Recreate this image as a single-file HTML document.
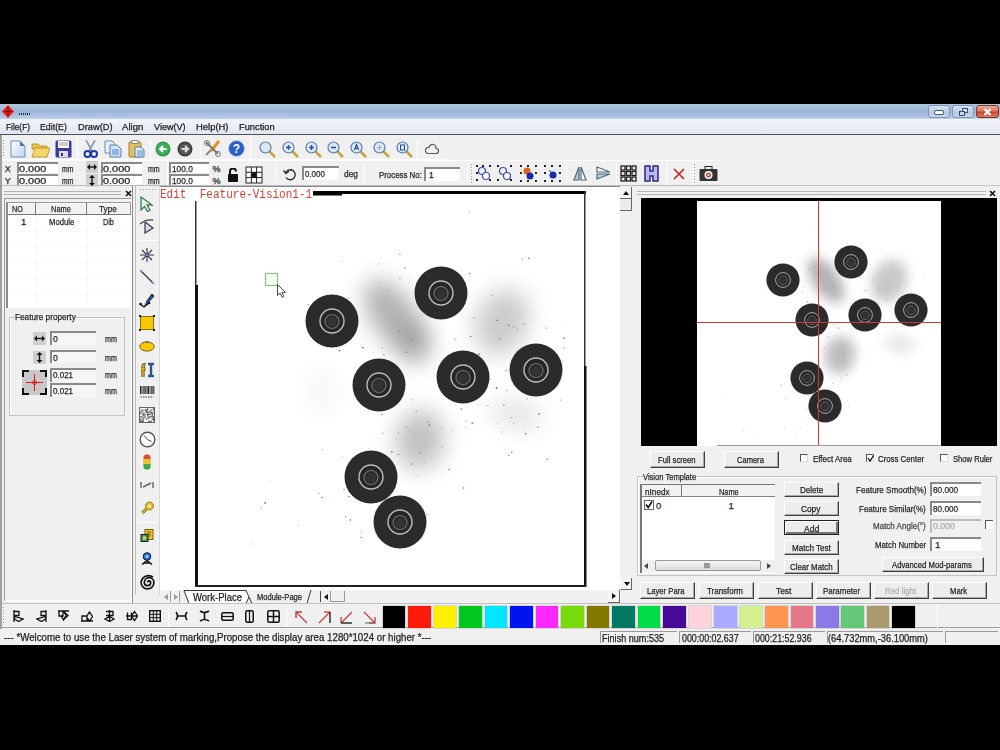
<!DOCTYPE html>
<html><head><meta charset="utf-8">
<style>
*{margin:0;padding:0;box-sizing:border-box}
html,body{width:1000px;height:750px;overflow:hidden;background:#000}
body{position:relative;font-family:"Liberation Sans",sans-serif;font-size:11px;color:#222}
.a{position:absolute}
.lbl,.btn,.inp,#menu span{white-space:nowrap}
#win{position:absolute;left:0;top:104px;width:1000px;height:541px;background:#f0f0f0;overflow:hidden}
#title{position:absolute;left:0;top:0;width:1000px;height:15px;background:linear-gradient(#b2c6e0 0%,#9cb6d7 45%,#a9c0de 75%,#bdd0e9 100%)}
#menu{position:absolute;left:0;top:15px;width:1000px;height:16px;background:linear-gradient(#f2f4fa,#e2e6f2);border-bottom:1px solid #505050}
#menu span{position:absolute;top:2px;font-size:10.5px;color:#222}
.tb{position:absolute;background:#f0f0f0}
.inp{position:absolute;background:#fff;border-top:2px solid #8a8a8a;border-left:2px solid #8a8a8a;font-size:10px;padding-left:1px;line-height:9px;color:#333}
.lbl{position:absolute;font-size:10px;color:#333}
.btn{position:absolute;background:#ededed;border:1px solid #fff;border-right-color:#404040;border-bottom-color:#404040;box-shadow:inset -1px -1px 0 #a8a8a8;font-size:10px;text-align:center;color:#222}
.sep{position:absolute;width:1px;background:#c8c8c8;border-right:1px solid #fff}
.t{position:absolute;white-space:nowrap;line-height:normal;transform-origin:0 0;-webkit-text-stroke:0.25px currentColor}
</style></head><body>
<div id="win">
  <div id="title">
    <svg class="a" style="left:1px;top:1px" width="14" height="13" viewBox="0 0 14 13"><path d="M7 0 L13 6.5 L7 13 L1 6.5Z" fill="#e0201a"/><path d="M7 2v9M3 6.5h8" stroke="#7a0a05" stroke-width="1"/></svg>
    <div class="a" style="left:19px;top:9px;width:12px;height:2px;background:repeating-linear-gradient(90deg,#234 0 1px,transparent 1px 2px)"></div>
    <div class="a" style="left:927.5px;top:0.5px;width:22px;height:13px;border:1px solid #8196b6;border-radius:3px;background:linear-gradient(#d4e0f0,#c0d0e6 50%,#b2c6e0 51%,#c6d6ec)"><div class="a" style="left:6px;top:5px;width:8px;height:3px;border-radius:1px;background:#fff;box-shadow:0 0 0 1px #4a5a70"></div></div>
    <div class="a" style="left:952px;top:0.5px;width:22px;height:13px;border:1px solid #8196b6;border-radius:3px;background:linear-gradient(#d4e0f0,#c0d0e6 50%,#b2c6e0 51%,#c6d6ec)"><div class="a" style="left:9px;top:2px;width:6px;height:5px;border:1px solid #3b4d66;background:#dde"></div><div class="a" style="left:6px;top:5px;width:6px;height:5px;border:1px solid #3b4d66;background:#cfd8e4"></div></div>
    <div class="a" style="left:976px;top:0.5px;width:22.5px;height:13px;border:1px solid #7a3a30;border-radius:3px;background:linear-gradient(#eaa595,#dc7a62 45%,#c8482e 55%,#d8765c)"><svg class="a" style="left:6px;top:2px" width="9" height="8" viewBox="0 0 9 8"><path d="M1.5 1l6 6M7.5 1l-6 6" stroke="#fff" stroke-width="2.2"/></svg></div>
  </div>
  <div id="menu">
  </div>

  <!-- toolbar row 1 -->
  <div class="a" style="left:2px;top:32px;width:444px;height:24px;background:#f0f0f0;border-bottom:1px solid #fff"></div>
  <div class="a" style="left:3px;top:36px;width:1px;height:16px;background:repeating-linear-gradient(#999 0 1px,transparent 1px 3px)"></div>
  <!-- new -->
  <svg class="a" style="left:10px;top:36px" width="16" height="18" viewBox="0 0 16 18"><path d="M1 1h9l5 5v11H1z" fill="url(#gdoc)" stroke="#6b8fb8"/><path d="M10 1v5h5" fill="#4a78b0"/><defs><linearGradient id="gdoc" x1="0" y1="0" x2="1" y2="1"><stop offset="0" stop-color="#fff"/><stop offset="1" stop-color="#b8d3ee"/></linearGradient></defs></svg>
  <!-- open -->
  <svg class="a" style="left:31px;top:37px" width="19" height="17" viewBox="0 0 19 17"><path d="M1 3h6l2 2h7v3H1z" fill="#e8c24a" stroke="#b08a20" stroke-width=".8"/><path d="M1 16L4 7h15l-3 9z" fill="#f5d66a" stroke="#b08a20" stroke-width=".8"/></svg>
  <!-- save -->
  <svg class="a" style="left:55px;top:36px" width="17" height="18" viewBox="0 0 17 18"><rect x="0.5" y="0.5" width="16" height="17" rx="1.5" fill="#3c3ca0"/><rect x="3" y="1" width="11" height="7" fill="#fff"/><path d="M4 3h9M4 5h9" stroke="#99a"/><rect x="4" y="11" width="9" height="6" fill="#dde"/><rect x="6" y="13" width="2" height="3" fill="#333"/></svg>
  <div class="sep" style="left:77px;top:35px;height:20px"></div>
  <!-- cut -->
  <svg class="a" style="left:83px;top:36px" width="15" height="18" viewBox="0 0 15 18"><path d="M3 0L9 11M12 0L6 11" stroke="#8898a8" stroke-width="1.6"/><circle cx="4.5" cy="14" r="3" fill="none" stroke="#1a3aa8" stroke-width="2"/><circle cx="11" cy="14" r="3" fill="none" stroke="#1a3aa8" stroke-width="2"/></svg>
  <!-- copy -->
  <svg class="a" style="left:104px;top:36px" width="18" height="18" viewBox="0 0 18 18"><path d="M1 1h7l3 3v9H1z" fill="#e8f0fa" stroke="#6a8ab8"/><path d="M6 5h7l4 4v8H6z" fill="#d4e4f6" stroke="#5a7ab0"/><path d="M8 10h7M8 12h7M8 14h7" stroke="#4a8ad0"/></svg>
  <!-- paste -->
  <svg class="a" style="left:128px;top:36px" width="17" height="18" viewBox="0 0 17 18"><rect x="1" y="2" width="12" height="15" rx="1" fill="#e0c060" stroke="#a08030"/><rect x="4" y="0.5" width="6" height="3" fill="#fff" stroke="#888"/><path d="M7 7h6l3 3v7H7z" fill="#e4eef8" stroke="#5a7ab0"/><path d="M9 11h6M9 13h6M9 15h6" stroke="#4a8ad0"/></svg>
  <div class="sep" style="left:150px;top:35px;height:20px"></div>
  <svg class="a" style="left:155px;top:37px" width="16" height="16" viewBox="0 0 16 16"><circle cx="8" cy="8" r="7.5" fill="#2f9a4a"/><circle cx="8" cy="8" r="6" fill="#3fae5a"/><path d="M11.5 8H5M8 5L5 8l3 3" stroke="#fff" stroke-width="2" fill="none"/></svg>
  <svg class="a" style="left:177px;top:37px" width="16" height="16" viewBox="0 0 16 16"><circle cx="8" cy="8" r="7.5" fill="#3a3a3a"/><circle cx="8" cy="8" r="6" fill="#585858"/><path d="M4.5 8H11M8 5l3 3-3 3" stroke="#ddd" stroke-width="2" fill="none"/></svg>
  <div class="sep" style="left:200px;top:35px;height:20px"></div>
  <svg class="a" style="left:204px;top:36px" width="17" height="17" viewBox="0 0 17 17"><path d="M2 15L13 4" stroke="#888" stroke-width="2"/><path d="M15 1L7 11" stroke="#e89020" stroke-width="3"/><path d="M2 2l12 12" stroke="#777" stroke-width="2"/><circle cx="3" cy="3" r="2.5" fill="none" stroke="#777"/><circle cx="14" cy="14" r="2.5" fill="none" stroke="#777"/></svg>
  <svg class="a" style="left:228px;top:36px" width="17" height="17" viewBox="0 0 17 17"><circle cx="8.5" cy="8.5" r="8" fill="#2a5ec8" stroke="#bcd" /><text x="8.5" y="13" font-size="12" font-weight="bold" fill="#fff" text-anchor="middle" font-family="Liberation Sans">?</text></svg>
  <div class="sep" style="left:250px;top:35px;height:20px"></div>
<svg class="a" style="left:259px;top:37px" width="17" height="17" viewBox="0 0 17 17"><path d="M10 10l6 6" stroke="#c8a040" stroke-width="2.5"/><circle cx="6.5" cy="6.5" r="5.5" fill="#dbe8f6" stroke="#5a7aa8" stroke-width="1.2"/></svg>
<svg class="a" style="left:282px;top:37px" width="17" height="17" viewBox="0 0 17 17"><path d="M10 10l6 6" stroke="#c8a040" stroke-width="2.5"/><circle cx="6.5" cy="6.5" r="5.5" fill="#dbe8f6" stroke="#5a7aa8" stroke-width="1.2"/><path d="M4 6.5h5M6.5 4v5" stroke="#2a4a9a" stroke-width="1.3"/></svg>
<svg class="a" style="left:305px;top:37px" width="17" height="17" viewBox="0 0 17 17"><path d="M10 10l6 6" stroke="#c8a040" stroke-width="2.5"/><circle cx="6.5" cy="6.5" r="5.5" fill="#dbe8f6" stroke="#5a7aa8" stroke-width="1.2"/><path d="M4 6.5h5M6.5 4v5" stroke="#2a4a9a" stroke-width="1.5"/></svg>
<svg class="a" style="left:327px;top:37px" width="17" height="17" viewBox="0 0 17 17"><path d="M10 10l6 6" stroke="#c8a040" stroke-width="2.5"/><circle cx="6.5" cy="6.5" r="5.5" fill="#dbe8f6" stroke="#5a7aa8" stroke-width="1.2"/><path d="M4 6.5h5" stroke="#2a4a9a" stroke-width="1.5"/></svg>
<svg class="a" style="left:350px;top:37px" width="17" height="17" viewBox="0 0 17 17"><path d="M10 10l6 6" stroke="#c8a040" stroke-width="2.5"/><circle cx="6.5" cy="6.5" r="5.5" fill="#dbe8f6" stroke="#5a7aa8" stroke-width="1.2"/><path d="M4.5 9L6.5 3.5 8.5 9M5 7.5h3" stroke="#2a4a9a" stroke-width="1.2" fill="none"/></svg>
<svg class="a" style="left:373px;top:37px" width="17" height="17" viewBox="0 0 17 17"><path d="M10 10l6 6" stroke="#c8a040" stroke-width="2.5"/><circle cx="6.5" cy="6.5" r="5.5" fill="#dbe8f6" stroke="#5a7aa8" stroke-width="1.2"/><path d="M4 6.5h5M6.5 4v5" stroke="#9ab" stroke-width="1"/></svg>
<svg class="a" style="left:396px;top:37px" width="17" height="17" viewBox="0 0 17 17"><path d="M10 10l6 6" stroke="#c8a040" stroke-width="2.5"/><circle cx="6.5" cy="6.5" r="5.5" fill="#dbe8f6" stroke="#5a7aa8" stroke-width="1.2"/><rect x="4.5" y="4" width="4" height="5" fill="none" stroke="#2a4a9a"/></svg>

  <div class="sep" style="left:417px;top:35px;height:20px"></div>
  <svg class="a" style="left:425px;top:39px" width="14" height="12" viewBox="0 0 14 12"><path d="M3 10.5h8a2.5 2.5 0 0 0 0-5 3.5 3.5 0 0 0-7-1A3 3 0 0 0 3 10.5z" fill="none" stroke="#555" stroke-width="1.2"/></svg>
  <!-- toolbar row 2 -->
  <div class="a" style="left:2px;top:56px;width:718px;height:26px;background:#f0f0f0;border-top:1px solid #fff;border-bottom:1px solid #bbb"></div>
  <div class="inp" style="left:17px;top:58px;width:41px;height:11px"></div>
  <div class="inp" style="left:17px;top:70px;width:41px;height:11px"></div>
  <div class="a" style="left:86px;top:57px;width:12px;height:12px;background:#cfcfcf"><svg class="a" style="left:1px;top:3px" width="10" height="6" viewBox="0 0 10 6"><path d="M2 3h6" stroke="#111" stroke-width="1.4"/><path d="M0 3l3-3v6zM10 3L7 0v6z" fill="#111"/></svg></div>
  <div class="a" style="left:86px;top:70px;width:12px;height:13px;background:#cfcfcf"><svg class="a" style="left:3px;top:1px" width="6" height="11" viewBox="0 0 6 11"><path d="M3 2v7" stroke="#111" stroke-width="1.4"/><path d="M3 0L0 3h6zM3 11L0 8h6z" fill="#111"/></svg></div>
  <div class="inp" style="left:101px;top:58px;width:41px;height:11px"></div>
  <div class="inp" style="left:101px;top:70px;width:41px;height:11px"></div>
  <div class="sep" style="left:167px;top:58px;height:23px"></div>
  <div class="inp" style="left:169px;top:58px;width:40px;height:11px"></div>
  <div class="inp" style="left:169px;top:70px;width:40px;height:11px"></div>
  <svg class="a" style="left:227px;top:64px" width="12" height="14" viewBox="0 0 12 14"><path d="M3 6V3.5a3 3 0 0 1 6 0" fill="none" stroke="#111" stroke-width="2"/><rect x="1" y="6" width="10" height="8" rx="1" fill="#111"/></svg>
  <svg class="a" style="left:245px;top:62px" width="18" height="18" viewBox="0 0 18 18"><rect x="1" y="1" width="16" height="16" fill="#fff" stroke="#222"/><path d="M6.3 1v16M11.6 1v16M1 6.3h16M1 11.6h16" stroke="#222"/><rect x="6.3" y="6.3" width="5.3" height="5.3" fill="#111"/></svg>
  <div class="sep" style="left:276px;top:58px;height:23px"></div>
  <svg class="a" style="left:283px;top:64px" width="13" height="13" viewBox="0 0 13 13"><path d="M3 4a5 5 0 1 1 0 5.5" fill="none" stroke="#222" stroke-width="1.3"/><path d="M0.5 2.5L3 5.5 6 3" fill="none" stroke="#222" stroke-width="1.3"/></svg>
  <div class="inp" style="left:302px;top:62px;width:37px;height:14px;line-height:12px"></div>
  <div class="sep" style="left:363px;top:58px;height:23px"></div>
  <div class="inp" style="left:424px;top:63px;width:36px;height:14px;line-height:12px"></div>
  <div class="sep" style="left:467px;top:58px;height:23px"></div>

  <!-- toolbar2 right icons -->
  <div class="a" style="left:471px;top:60px;width:1px;height:20px;background:repeating-linear-gradient(#999 0 1px,transparent 1px 3px)"></div>
  <svg class="a" style="left:476px;top:60.5px" width="16" height="17" viewBox="0 0 16 17"><g fill="#222"><rect x="0" y="0" width="2" height="2"/><rect x="13" y="0" width="2" height="2"/><rect x="0" y="14" width="2" height="2"/><rect x="13" y="14" width="2" height="2"/><rect x="6" y="0" width="2" height="2"/><rect x="0" y="7" width="2" height="2"/></g><circle cx="6" cy="6" r="3.5" fill="none" stroke="#3a4ab0" stroke-width="1.2"/><circle cx="10" cy="11" r="3.5" fill="#fff" stroke="#3a4ab0" stroke-width="1.2"/></svg>
  <svg class="a" style="left:497px;top:60.5px" width="16" height="17" viewBox="0 0 16 17"><g fill="#222"><rect x="0" y="0" width="2" height="2"/><rect x="13" y="0" width="2" height="2"/><rect x="0" y="14" width="2" height="2"/><rect x="13" y="14" width="2" height="2"/></g><circle cx="6" cy="6" r="3.5" fill="none" stroke="#3a4ab0" stroke-width="1.2"/><circle cx="10" cy="11" r="3.5" fill="#fff" stroke="#3a4ab0" stroke-width="1.2"/></svg>
  <svg class="a" style="left:520px;top:60.5px" width="17" height="17" viewBox="0 0 17 17"><g fill="#222"><rect x="0" y="0" width="2" height="2"/><rect x="15" y="0" width="2" height="2"/><rect x="0" y="15" width="2" height="2"/><rect x="15" y="15" width="2" height="2"/><rect x="7" y="0" width="2" height="2"/><rect x="0" y="7" width="2" height="2"/><rect x="15" y="7" width="2" height="2"/><rect x="7" y="15" width="2" height="2"/></g><circle cx="7" cy="6" r="3.5" fill="#e06020"/><circle cx="10" cy="11" r="3.5" fill="#1a2ab0"/></svg>
  <svg class="a" style="left:544px;top:60.5px" width="17" height="17" viewBox="0 0 17 17"><g fill="#222"><rect x="0" y="0" width="2" height="2"/><rect x="15" y="0" width="2" height="2"/><rect x="0" y="15" width="2" height="2"/><rect x="15" y="15" width="2" height="2"/><rect x="7" y="0" width="2" height="2"/><rect x="0" y="7" width="2" height="2"/><rect x="15" y="7" width="2" height="2"/><rect x="7" y="15" width="2" height="2"/></g><circle cx="9" cy="10" r="3.5" fill="#1a2ab0"/><path d="M5 5l3 3" stroke="#1a2ab0"/></svg>
  <div class="sep" style="left:566px;top:58px;height:23px"></div>
  <svg class="a" style="left:573px;top:61.5px" width="14" height="15" viewBox="0 0 14 15"><path d="M6 1L1 14h5z" fill="#bcd" stroke="#4a6a7a" stroke-width="1.2"/><path d="M8 1l5 13H8z" fill="#fff" stroke="#4a6a7a" stroke-width="1.2"/></svg>
  <svg class="a" style="left:596px;top:61.5px" width="15" height="14" viewBox="0 0 15 14"><path d="M14 6L1 1v5z" fill="#fff" stroke="#4a6a7a" stroke-width="1.2"/><path d="M14 8L1 13V8z" fill="#bcd" stroke="#4a6a7a" stroke-width="1.2"/></svg>
  <div class="sep" style="left:616px;top:58px;height:23px"></div>
  <svg class="a" style="left:620px;top:60.5px" width="17" height="17" viewBox="0 0 17 17"><g fill="none" stroke="#222" stroke-width="1.3"><rect x="1" y="1" width="4" height="4"/><rect x="6.5" y="1" width="4" height="4"/><rect x="12" y="1" width="4" height="4"/><rect x="1" y="6.5" width="4" height="4"/><rect x="6.5" y="6.5" width="4" height="4"/><rect x="12" y="6.5" width="4" height="4"/><rect x="1" y="12" width="4" height="4"/><rect x="6.5" y="12" width="4" height="4"/><rect x="12" y="12" width="4" height="4"/></g></svg>
  <svg class="a" style="left:644px;top:60.5px" width="15" height="17" viewBox="0 0 15 17"><path d="M1 1h5v5h3V1h5v15H9v-5H6v5H1z" fill="#b8b8f0" stroke="#2a2a80" stroke-width="1.5"/></svg>
  <div class="sep" style="left:666px;top:58px;height:23px"></div>
  <svg class="a" style="left:673px;top:63.5px" width="12" height="12" viewBox="0 0 12 12"><path d="M1 1l10 10M11 1L1 11" stroke="#c82020" stroke-width="1.6"/></svg>
  <div class="sep" style="left:693px;top:58px;height:23px"></div>
  <div class="a" style="left:694px;top:60px;width:1px;height:20px;background:repeating-linear-gradient(#999 0 1px,transparent 1px 3px)"></div>
  <svg class="a" style="left:699px;top:61.5px" width="19" height="16" viewBox="0 0 19 16"><rect x="6" y="0.5" width="7" height="3" fill="none" stroke="#222"/><rect x="0.5" y="3" width="18" height="12" rx="1" fill="#333"/><circle cx="9.5" cy="9" r="4" fill="#fff"/><circle cx="9.5" cy="9" r="2.5" fill="#d04040"/><circle cx="9.5" cy="9" r="1" fill="#fff"/></svg>

  <div class="a" style="left:720px;top:81px;width:280px;height:1px;background:#c4c4c4"></div>
  <!-- main area (win top = 104) -->
  <div class="a" style="left:0;top:31px;width:2px;height:510px;background:#a0a0a0"></div>
  <!-- left panel: abs y 186-603 -->
  <div class="a" style="left:4px;top:87px;width:117px;height:4px;border-top:1px solid #b4b4b4;border-bottom:1px solid #b4b4b4"></div>
  <svg class="a" style="left:125px;top:86px" width="7" height="7" viewBox="0 0 7 7"><path d="M1 1l5 5M6 1L1 6" stroke="#111" stroke-width="1.6"/></svg>
  <div class="a" style="left:4px;top:94px;width:128px;height:403px;border:1px solid #9a9a9a;border-right-color:#fff;border-bottom-color:#fff"></div>
  <div class="a" style="left:132px;top:82px;width:1px;height:420px;background:#8a8a8a"></div>
  <!-- table -->
  <div class="a" style="left:6px;top:98px;width:125px;height:106px;background:#fff;border-top:1px solid #999;border-left:2px solid #8a8a8a"></div><div class="a" style="left:9px;top:127px;width:121px;height:1px;background:#f8f8f8"></div><div class="a" style="left:9px;top:143px;width:121px;height:1px;background:#f8f8f8"></div><div class="a" style="left:9px;top:159px;width:121px;height:1px;background:#f8f8f8"></div><div class="a" style="left:9px;top:175px;width:121px;height:1px;background:#f8f8f8"></div><div class="a" style="left:9px;top:191px;width:121px;height:1px;background:#f8f8f8"></div><div class="a" style="left:36px;top:111px;width:1px;height:93px;background:#f8f8f8"></div><div class="a" style="left:87px;top:111px;width:1px;height:93px;background:#f8f8f8"></div>
  <div class="a" style="left:8px;top:99px;width:123px;height:12px;background:#f2f2f2;border-right:1px solid #999;border-bottom:1px solid #777;box-shadow:inset 1px 1px 0 #fff"></div>
  <div class="a" style="left:35px;top:99px;width:1px;height:11px;background:#777"></div>
  <div class="a" style="left:86px;top:99px;width:1px;height:11px;background:#777"></div>
  <!-- feature property group abs y 313-412 -->
  <div class="a" style="left:9px;top:213px;width:116px;height:99px;border:1px solid #c4c4c4;box-shadow:inset 1px 1px 0 #fff"></div>
  <div class="a" style="left:33px;top:228px;width:13px;height:13px;background:#cfcfcf"><svg class="a" style="left:1px;top:3px" width="11" height="7" viewBox="0 0 11 7"><path d="M2 3.5h7" stroke="#111" stroke-width="1.4"/><path d="M0 3.5L3 .5v6zM11 3.5L8 .5v6z" fill="#111"/></svg></div>
  <div class="a" style="left:33px;top:247px;width:13px;height:13px;background:#cfcfcf"><svg class="a" style="left:3px;top:1px" width="7" height="11" viewBox="0 0 7 11"><path d="M3.5 2v7" stroke="#111" stroke-width="1.4"/><path d="M3.5 0L.5 3h6zM3.5 11L.5 8h6z" fill="#111"/></svg></div>
  <div class="inp" style="left:50px;top:227px;width:46px;height:14px;background:#f6f6f6"></div>
  <div class="inp" style="left:50px;top:246px;width:46px;height:13px;background:#f6f6f6"></div>
  <div class="a" style="left:22px;top:266px;width:25px;height:25px;background:#c8c8c8"><svg class="a" style="left:0;top:0" width="25" height="25" viewBox="0 0 25 25"><path d="M1 7V1h6M18 1h6v6M24 18v6h-6M7 24H1v-6" stroke="#111" stroke-width="2" fill="none"/><path d="M12.5 4v17M4 12.5h17" stroke="#e02020" stroke-width="1"/><circle cx="12.5" cy="12.5" r="2" fill="none" stroke="#e02020"/></svg></div>
  <div class="inp" style="left:50px;top:264px;width:46px;height:14px;background:#f6f6f6"></div>
  <div class="inp" style="left:50px;top:279px;width:46px;height:14px;background:#f6f6f6"></div>

  <!-- vertical tool strip abs x 135-160 -->
  <div class="a" style="left:135px;top:82px;width:25px;height:409px;background:#f0f0f0;border-left:1px solid #c0c0c0;border-right:1px solid #d8d8d8"></div>
  <div class="a" style="left:140px;top:85px;width:16px;height:1px;background:repeating-linear-gradient(90deg,#999 0 1px,transparent 1px 3px)"></div>
  <svg class="a" style="left:139px;top:92px" width="16" height="16" viewBox="0 0 16 16"><path d="M2 1v13l3.5-3.5 3 5 2.5-1.5-3-5H13z" fill="#e4f4ea" stroke="#3a7a50" stroke-width="1.3"/></svg>
<svg class="a" style="left:139px;top:114px" width="16" height="16" viewBox="0 0 16 16"><path d="M1 6Q7 1 14 2" fill="none" stroke="#444" stroke-width="1.3"/><path d="M6 4v11l8-5z" fill="#d8d8f0" stroke="#444" stroke-width="1.3"/><circle cx="6" cy="4" r="1.3" fill="#6a6ab0"/></svg>
<div class="a" style="left:138px;top:136px;width:19px;height:1px;background:#aaa;border-bottom:1px solid #fff"></div>
<svg class="a" style="left:139px;top:143px" width="16" height="16" viewBox="0 0 16 16"><path d="M8 1v14M1 8h14M3 3l10 10M13 3L3 13" stroke="#334" stroke-width="1.1"/><circle cx="8" cy="8" r="1.3" fill="#6a8ad0"/></svg>
<svg class="a" style="left:139px;top:165px" width="16" height="16" viewBox="0 0 16 16"><path d="M2 2l12 12" stroke="#333" stroke-width="1.2"/><circle cx="2" cy="2" r="1.3" fill="#7a9ad0"/><circle cx="14" cy="14" r="1.3" fill="#7a9ad0"/></svg>
<svg class="a" style="left:139px;top:188px" width="16" height="16" viewBox="0 0 16 16"><path d="M1 12l4 3 5-4" fill="none" stroke="#111" stroke-width="1.3"/><circle cx="1.5" cy="12" r="1.3" fill="#111"/><circle cx="10" cy="11" r="1.3" fill="#111"/><path d="M5 13L13 2l2 2-8 9z" fill="#2a5ab8" stroke="#112"/><path d="M5 13l2-3" stroke="#fff"/></svg>
<svg class="a" style="left:139px;top:211px" width="16" height="16" viewBox="0 0 16 16"><rect x="1.5" y="1.5" width="13" height="13" fill="#f8c800" stroke="#887020"/><g fill="#222"><rect x="0" y="0" width="2" height="2"/><rect x="14" y="0" width="2" height="2"/><rect x="0" y="14" width="2" height="2"/><rect x="14" y="14" width="2" height="2"/></g></svg>
<svg class="a" style="left:139px;top:234px" width="16" height="16" viewBox="0 0 16 16"><ellipse cx="8" cy="8.5" rx="7.2" ry="4.6" fill="#f8c800" stroke="#806010" stroke-width="1"/><path d="M6.5 4h3" stroke="#556" stroke-width="1.2"/></svg>
<svg class="a" style="left:139px;top:258px" width="16" height="16" viewBox="0 0 16 16"><path d="M6.5 2.5Q4 2 4 5v10M2 7h4.5" stroke="#333" stroke-width="3" fill="none"/><path d="M6.5 2.5Q4 2 4 5v10M2 7h4.5" stroke="#e8b400" stroke-width="1.6" fill="none"/><path d="M9 2h6M12 2v12M9 14h6" stroke="#2a5a8a" stroke-width="2.4"/></svg>
<svg class="a" style="left:139px;top:281px" width="16" height="16" viewBox="0 0 16 16"><g fill="#222"><rect x="1" y="1" width="1" height="8"/><rect x="2.5" y="1" width="0.6" height="8"/><rect x="3.6" y="1" width="1" height="8"/><rect x="5.2" y="1" width="0.6" height="8"/><rect x="6.3" y="1" width="1.2" height="8"/><rect x="8" y="1" width="0.6" height="8"/><rect x="9" y="1" width="1" height="8"/><rect x="10.6" y="1" width="0.6" height="8"/><rect x="11.7" y="1" width="1" height="8"/><rect x="13.3" y="1" width="0.6" height="8"/><rect x="14.3" y="1" width="1" height="8"/></g><path d="M1.5 12h13" stroke="#777" stroke-width="1.4" stroke-dasharray="1.5 1"/></svg>
<svg class="a" style="left:139px;top:303px" width="16" height="16" viewBox="0 0 16 16"><rect x="0.5" y="0.5" width="15" height="15" fill="#f4f4f4" stroke="#666"/><g fill="#444"><rect x="8.10" y="1.20" width="1.15" height="1.15"/><rect x="13.85" y="1.20" width="1.15" height="1.15"/><rect x="2.35" y="2.35" width="1.15" height="1.15"/><rect x="5.80" y="2.35" width="1.15" height="1.15"/><rect x="6.95" y="2.35" width="1.15" height="1.15"/><rect x="8.10" y="2.35" width="1.15" height="1.15"/><rect x="11.55" y="2.35" width="1.15" height="1.15"/><rect x="13.85" y="2.35" width="1.15" height="1.15"/><rect x="2.35" y="3.50" width="1.15" height="1.15"/><rect x="3.50" y="3.50" width="1.15" height="1.15"/><rect x="5.80" y="3.50" width="1.15" height="1.15"/><rect x="6.95" y="3.50" width="1.15" height="1.15"/><rect x="10.40" y="3.50" width="1.15" height="1.15"/><rect x="1.20" y="4.65" width="1.15" height="1.15"/><rect x="6.95" y="4.65" width="1.15" height="1.15"/><rect x="8.10" y="4.65" width="1.15" height="1.15"/><rect x="9.25" y="4.65" width="1.15" height="1.15"/><rect x="10.40" y="4.65" width="1.15" height="1.15"/><rect x="11.55" y="4.65" width="1.15" height="1.15"/><rect x="12.70" y="4.65" width="1.15" height="1.15"/><rect x="1.20" y="5.80" width="1.15" height="1.15"/><rect x="3.50" y="5.80" width="1.15" height="1.15"/><rect x="4.65" y="5.80" width="1.15" height="1.15"/><rect x="8.10" y="5.80" width="1.15" height="1.15"/><rect x="11.55" y="5.80" width="1.15" height="1.15"/><rect x="13.85" y="5.80" width="1.15" height="1.15"/><rect x="3.50" y="6.95" width="1.15" height="1.15"/><rect x="5.80" y="6.95" width="1.15" height="1.15"/><rect x="8.10" y="6.95" width="1.15" height="1.15"/><rect x="9.25" y="6.95" width="1.15" height="1.15"/><rect x="10.40" y="6.95" width="1.15" height="1.15"/><rect x="12.70" y="6.95" width="1.15" height="1.15"/><rect x="3.50" y="8.10" width="1.15" height="1.15"/><rect x="4.65" y="8.10" width="1.15" height="1.15"/><rect x="8.10" y="8.10" width="1.15" height="1.15"/><rect x="12.70" y="8.10" width="1.15" height="1.15"/><rect x="1.20" y="9.25" width="1.15" height="1.15"/><rect x="2.35" y="9.25" width="1.15" height="1.15"/><rect x="5.80" y="9.25" width="1.15" height="1.15"/><rect x="9.25" y="9.25" width="1.15" height="1.15"/><rect x="10.40" y="9.25" width="1.15" height="1.15"/><rect x="11.55" y="9.25" width="1.15" height="1.15"/><rect x="12.70" y="9.25" width="1.15" height="1.15"/><rect x="13.85" y="9.25" width="1.15" height="1.15"/><rect x="3.50" y="10.40" width="1.15" height="1.15"/><rect x="4.65" y="10.40" width="1.15" height="1.15"/><rect x="8.10" y="10.40" width="1.15" height="1.15"/><rect x="9.25" y="10.40" width="1.15" height="1.15"/><rect x="13.85" y="10.40" width="1.15" height="1.15"/><rect x="1.20" y="11.55" width="1.15" height="1.15"/><rect x="3.50" y="11.55" width="1.15" height="1.15"/><rect x="6.95" y="11.55" width="1.15" height="1.15"/><rect x="12.70" y="11.55" width="1.15" height="1.15"/><rect x="13.85" y="11.55" width="1.15" height="1.15"/><rect x="1.20" y="12.70" width="1.15" height="1.15"/><rect x="3.50" y="12.70" width="1.15" height="1.15"/><rect x="13.85" y="12.70" width="1.15" height="1.15"/><rect x="1.20" y="13.85" width="1.15" height="1.15"/><rect x="2.35" y="13.85" width="1.15" height="1.15"/><rect x="3.50" y="13.85" width="1.15" height="1.15"/><rect x="9.25" y="13.85" width="1.15" height="1.15"/><rect x="10.40" y="13.85" width="1.15" height="1.15"/><rect x="11.55" y="13.85" width="1.15" height="1.15"/></g></svg>
<svg class="a" style="left:139px;top:327px" width="17" height="17" viewBox="0 0 17 17"><circle cx="8.5" cy="8.5" r="7.3" fill="#fff" stroke="#555" stroke-width="1.4"/><path d="M8.5 8.5L5 4.5M8.5 8.5l4 2" stroke="#444" stroke-width="1" fill="none"/></svg>
<svg class="a" style="left:140px;top:350px" width="14" height="16" viewBox="0 0 14 16"><rect x="3.5" y="0.5" width="7" height="15" rx="3.5" fill="#9ac040"/><path d="M3.5 4a3.5 3.5 0 0 1 7 0v1h-7z" fill="#e04a3a"/><rect x="3.5" y="5" width="7" height="5" fill="#f0c030"/><path d="M3.5 10h7v2a3.5 3.5 0 0 1-7 0z" fill="#40a848"/></svg>
<svg class="a" style="left:139px;top:377px" width="16" height="8" viewBox="0 0 16 8"><path d="M2 1v6M14 1v6M4 6l8-4" stroke="#666" stroke-width="1.4" fill="none"/></svg>
<svg class="a" style="left:140px;top:397px" width="15" height="14" viewBox="0 0 15 14"><circle cx="9.5" cy="5" r="4" fill="#e8c020" stroke="#6a5a10" stroke-width="1" stroke-dasharray="1.6 .9"/><circle cx="9.5" cy="5" r="1.5" fill="#fff"/><path d="M7 7.5l-4.5 4.5" stroke="#6a5a10" stroke-width="3"/><path d="M7 7.5l-4.5 4.5" stroke="#e8c020" stroke-width="1.6"/></svg>
<div class="a" style="left:138px;top:418px;width:19px;height:1px;background:#aaa;border-bottom:1px solid #fff"></div>
<svg class="a" style="left:140px;top:425px" width="14" height="13" viewBox="0 0 14 13"><rect x="5" y="0.5" width="8" height="10" fill="#f0c830" stroke="#7a6010"/><path d="M7 3h4M7 5h4M7 7h4" stroke="#7a6010"/><rect x="1" y="5.5" width="7" height="7" fill="#3a9a50" stroke="#223"/><rect x="3" y="7.5" width="3" height="3" fill="#e8d060"/></svg>
<svg class="a" style="left:140px;top:448px" width="14" height="13" viewBox="0 0 14 13"><circle cx="7" cy="4.5" r="3.8" fill="#2a7ad8" stroke="#113" stroke-width="1"/><circle cx="7" cy="4.5" r="1.3" fill="#cde"/><path d="M7 8.5L2 12.5M7 8.5l5 4M3.5 11h7" stroke="#111" stroke-width="1.6"/></svg>
<svg class="a" style="left:139px;top:470px" width="17" height="17" viewBox="0 0 17 17"><path d="M8.5 8.5a1.6 1.6 0 0 1 3.2 0 3.2 3.2 0 0 1-6.4 0 4.8 4.8 0 0 1 9.6 0 6.4 6.4 0 0 1-12.8 0A7.6 7.6 0 0 1 14 3" fill="none" stroke="#111" stroke-width="1.7"/></svg>


  <!-- canvas abs x 160-620, y 186-590 -->
  <div class="a" style="left:160px;top:82px;width:460px;height:404px;background:#fff;border-top:1px solid #888"></div>
  <svg class="a" style="left:160px;top:83px" width="460" height="403" viewBox="0 0 460 403"><defs><filter id="bl" x="-60%" y="-60%" width="220%" height="220%"><feGaussianBlur stdDeviation="11"/></filter></defs><ellipse cx="235" cy="131" rx="22" ry="44" transform="rotate(-35 235 131)" fill="#4a4a4a" opacity="0.42" filter="url(#bl)"/><ellipse cx="256" cy="158" rx="18" ry="22" transform="rotate(0 256 158)" fill="#4a4a4a" opacity="0.22" filter="url(#bl)"/><ellipse cx="342" cy="135" rx="26" ry="34" transform="rotate(25 342 135)" fill="#4a4a4a" opacity="0.28" filter="url(#bl)"/><ellipse cx="260" cy="253" rx="24" ry="30" transform="rotate(10 260 253)" fill="#4a4a4a" opacity="0.34" filter="url(#bl)"/><ellipse cx="356" cy="227" rx="26" ry="14" transform="rotate(10 356 227)" fill="#4a4a4a" opacity="0.14" filter="url(#bl)"/><ellipse cx="162" cy="205" rx="12" ry="22" transform="rotate(0 162 205)" fill="#4a4a4a" opacity="0.05" filter="url(#bl)"/><circle cx="293.2" cy="241.7" r="0.42" fill="#444" opacity="0.79"/><circle cx="230.8" cy="143.3" r="0.65" fill="#444" opacity="0.32"/><circle cx="337.8" cy="236.1" r="0.68" fill="#444" opacity="0.34"/><circle cx="190.3" cy="333.0" r="0.71" fill="#444" opacity="0.87"/><circle cx="159.0" cy="306.5" r="0.51" fill="#444" opacity="0.63"/><circle cx="335.2" cy="151.9" r="0.46" fill="#444" opacity="0.49"/><circle cx="376.3" cy="160.5" r="0.49" fill="#444" opacity="0.36"/><circle cx="188.9" cy="111.1" r="0.65" fill="#444" opacity="0.62"/><circle cx="182.5" cy="270.0" r="0.58" fill="#444" opacity="0.45"/><circle cx="331.8" cy="108.1" r="0.69" fill="#444" opacity="0.62"/><circle cx="256.3" cy="224.4" r="0.89" fill="#444" opacity="0.37"/><circle cx="365.6" cy="246.7" r="0.87" fill="#444" opacity="0.55"/><circle cx="244.8" cy="81.0" r="0.84" fill="#444" opacity="0.49"/><circle cx="221.8" cy="227.2" r="0.63" fill="#444" opacity="0.80"/><circle cx="209.0" cy="261.4" r="0.43" fill="#444" opacity="0.72"/><circle cx="244.2" cy="309.8" r="0.54" fill="#444" opacity="0.53"/><circle cx="298.6" cy="258.5" r="0.48" fill="#444" opacity="0.37"/><circle cx="246.5" cy="165.3" r="0.77" fill="#444" opacity="0.54"/><circle cx="377.9" cy="240.2" r="0.67" fill="#444" opacity="0.83"/><circle cx="367.3" cy="211.8" r="0.61" fill="#444" opacity="0.52"/><circle cx="367.8" cy="223.2" r="0.49" fill="#444" opacity="0.44"/><circle cx="405.8" cy="138.0" r="0.49" fill="#444" opacity="0.47"/><circle cx="310.7" cy="149.4" r="0.68" fill="#444" opacity="0.87"/><circle cx="225.5" cy="295.0" r="0.77" fill="#444" opacity="0.57"/><circle cx="138.5" cy="338.3" r="0.45" fill="#444" opacity="0.68"/><circle cx="282.2" cy="240.7" r="0.62" fill="#444" opacity="0.37"/><circle cx="170.8" cy="313.3" r="0.48" fill="#444" opacity="0.36"/><circle cx="249.9" cy="244.2" r="0.50" fill="#444" opacity="0.53"/><circle cx="305.7" cy="239.9" r="0.64" fill="#444" opacity="0.37"/><circle cx="382.0" cy="225.8" r="0.64" fill="#444" opacity="0.35"/><circle cx="239.9" cy="67.3" r="0.64" fill="#444" opacity="0.72"/><circle cx="267.2" cy="327.2" r="0.66" fill="#444" opacity="0.39"/><circle cx="227.8" cy="278.4" r="0.55" fill="#444" opacity="0.69"/><circle cx="229.7" cy="103.6" r="0.58" fill="#444" opacity="0.40"/><circle cx="280.5" cy="120.6" r="0.56" fill="#444" opacity="0.43"/><circle cx="362.3" cy="72.3" r="0.77" fill="#444" opacity="0.44"/><circle cx="105.2" cy="315.9" r="0.89" fill="#444" opacity="0.77"/><circle cx="351.8" cy="265.3" r="0.88" fill="#444" opacity="0.57"/><circle cx="292.0" cy="243.7" r="0.51" fill="#444" opacity="0.44"/><circle cx="319.0" cy="167.2" r="0.89" fill="#444" opacity="0.67"/><circle cx="182.3" cy="140.5" r="0.80" fill="#444" opacity="0.35"/><circle cx="298.9" cy="95.5" r="0.78" fill="#444" opacity="0.59"/><circle cx="294.5" cy="153.1" r="0.44" fill="#444" opacity="0.87"/><circle cx="313.9" cy="236.5" r="0.44" fill="#444" opacity="0.40"/><circle cx="386.1" cy="141.1" r="0.63" fill="#444" opacity="0.69"/><circle cx="221.8" cy="213.6" r="0.73" fill="#444" opacity="0.51"/><circle cx="162.1" cy="310.5" r="0.80" fill="#444" opacity="0.74"/><circle cx="148.1" cy="117.5" r="0.62" fill="#444" opacity="0.82"/><circle cx="363.8" cy="137.2" r="0.65" fill="#444" opacity="0.76"/><circle cx="257.9" cy="289.4" r="0.47" fill="#444" opacity="0.85"/><circle cx="301.3" cy="222.1" r="0.81" fill="#444" opacity="0.61"/><circle cx="185.6" cy="329.8" r="0.66" fill="#444" opacity="0.82"/><circle cx="293.0" cy="94.8" r="0.47" fill="#444" opacity="0.38"/><circle cx="162.1" cy="262.6" r="0.56" fill="#444" opacity="0.61"/><circle cx="101.2" cy="320.6" r="0.84" fill="#444" opacity="0.33"/><circle cx="329.9" cy="192.3" r="0.65" fill="#444" opacity="0.64"/><circle cx="188.4" cy="152.2" r="0.65" fill="#444" opacity="0.61"/><circle cx="218.7" cy="265.7" r="0.64" fill="#444" opacity="0.86"/><circle cx="238.2" cy="246.1" r="0.53" fill="#444" opacity="0.64"/><circle cx="350.2" cy="116.9" r="0.46" fill="#444" opacity="0.57"/><circle cx="219.9" cy="95.8" r="0.51" fill="#444" opacity="0.48"/><circle cx="258.5" cy="119.0" r="0.76" fill="#444" opacity="0.70"/><circle cx="339.6" cy="152.0" r="0.63" fill="#444" opacity="0.75"/><circle cx="202.9" cy="160.6" r="0.89" fill="#444" opacity="0.80"/><circle cx="309.6" cy="25.1" r="0.60" fill="#444" opacity="0.55"/><circle cx="236.6" cy="303.9" r="0.41" fill="#444" opacity="0.63"/><circle cx="346.9" cy="203.4" r="0.66" fill="#444" opacity="0.48"/><circle cx="308.0" cy="191.3" r="0.51" fill="#444" opacity="0.83"/><circle cx="238.9" cy="144.3" r="0.79" fill="#444" opacity="0.46"/><circle cx="368.9" cy="71.3" r="0.74" fill="#444" opacity="0.87"/><circle cx="387.1" cy="272.2" r="0.69" fill="#444" opacity="0.72"/><circle cx="227.0" cy="203.5" r="0.49" fill="#444" opacity="0.84"/><circle cx="306.0" cy="234.2" r="0.80" fill="#444" opacity="0.35"/><circle cx="403.7" cy="161.4" r="0.63" fill="#444" opacity="0.50"/><circle cx="92.7" cy="356.9" r="0.71" fill="#444" opacity="0.33"/><circle cx="282.3" cy="260.3" r="0.56" fill="#444" opacity="0.48"/><circle cx="329.8" cy="172.9" r="0.49" fill="#444" opacity="0.51"/><circle cx="251.0" cy="132.6" r="0.41" fill="#444" opacity="0.60"/><circle cx="313.8" cy="130.7" r="0.62" fill="#444" opacity="0.69"/><circle cx="336.6" cy="200.9" r="0.84" fill="#444" opacity="0.88"/><circle cx="222.1" cy="161.0" r="0.57" fill="#444" opacity="0.80"/><circle cx="313.3" cy="151.2" r="0.43" fill="#444" opacity="0.38"/><circle cx="181.9" cy="74.6" r="0.62" fill="#444" opacity="0.33"/><circle cx="379.6" cy="199.9" r="0.54" fill="#444" opacity="0.45"/><circle cx="281.5" cy="259.3" r="0.53" fill="#444" opacity="0.30"/><circle cx="351.2" cy="230.7" r="0.67" fill="#444" opacity="0.45"/><circle cx="264.5" cy="274.8" r="0.57" fill="#444" opacity="0.35"/><circle cx="236.6" cy="252.6" r="0.65" fill="#444" opacity="0.30"/><circle cx="268.0" cy="235.2" r="0.69" fill="#444" opacity="0.54"/><circle cx="251.5" cy="277.0" r="0.69" fill="#444" opacity="0.62"/><circle cx="309.5" cy="86.6" r="0.84" fill="#444" opacity="0.53"/><circle cx="252.5" cy="212.8" r="0.54" fill="#444" opacity="0.67"/><circle cx="404.0" cy="151.1" r="0.85" fill="#444" opacity="0.68"/><circle cx="201.2" cy="350.4" r="0.65" fill="#444" opacity="0.80"/><circle cx="264.5" cy="86.0" r="0.85" fill="#444" opacity="0.71"/><circle cx="348.8" cy="138.2" r="0.72" fill="#444" opacity="0.88"/><circle cx="370.4" cy="199.6" r="0.71" fill="#444" opacity="0.68"/><circle cx="337.2" cy="133.2" r="0.80" fill="#444" opacity="0.75"/><circle cx="184.1" cy="302.5" r="0.66" fill="#444" opacity="0.75"/><circle cx="353.9" cy="236.8" r="0.53" fill="#444" opacity="0.74"/><circle cx="346.1" cy="183.3" r="0.63" fill="#444" opacity="0.81"/><circle cx="179.8" cy="141.0" r="0.78" fill="#444" opacity="0.67"/><circle cx="357.5" cy="142.2" r="0.53" fill="#444" opacity="0.75"/><circle cx="246.4" cy="240.1" r="0.64" fill="#444" opacity="0.59"/><circle cx="218.7" cy="76.9" r="0.55" fill="#444" opacity="0.61"/><circle cx="312.3" cy="236.1" r="0.90" fill="#444" opacity="0.63"/><circle cx="341.4" cy="241.7" r="0.41" fill="#444" opacity="0.58"/><circle cx="212.8" cy="304.3" r="0.53" fill="#444" opacity="0.43"/><circle cx="353.6" cy="139.9" r="0.77" fill="#444" opacity="0.46"/><circle cx="303.6" cy="301.0" r="0.65" fill="#444" opacity="0.83"/><circle cx="268.7" cy="327.2" r="0.64" fill="#444" opacity="0.31"/><circle cx="297.5" cy="114.3" r="0.60" fill="#444" opacity="0.74"/><circle cx="341.9" cy="245.1" r="0.82" fill="#444" opacity="0.30"/><circle cx="269.4" cy="238.0" r="0.86" fill="#444" opacity="0.73"/><circle cx="259.7" cy="265.8" r="0.60" fill="#444" opacity="0.82"/><circle cx="212.9" cy="165.5" r="0.54" fill="#444" opacity="0.33"/><circle cx="295.8" cy="151.8" r="0.72" fill="#444" opacity="0.39"/><circle cx="231.9" cy="264.9" r="0.79" fill="#444" opacity="0.77"/><circle cx="388.1" cy="196.6" r="0.72" fill="#444" opacity="0.85"/><circle cx="109.2" cy="293.6" r="0.42" fill="#444" opacity="0.74"/><circle cx="343.8" cy="218.0" r="0.83" fill="#444" opacity="0.59"/><circle cx="201.5" cy="345.4" r="0.57" fill="#444" opacity="0.48"/><circle cx="238.5" cy="267.4" r="0.64" fill="#444" opacity="0.70"/><circle cx="251.8" cy="153.6" r="0.50" fill="#444" opacity="0.84"/><circle cx="327.9" cy="218.5" r="0.57" fill="#444" opacity="0.76"/><circle cx="364.4" cy="239.6" r="0.45" fill="#444" opacity="0.51"/><circle cx="223.8" cy="167.8" r="0.80" fill="#444" opacity="0.42"/><circle cx="239.9" cy="91.7" r="0.61" fill="#444" opacity="0.61"/><circle cx="348.7" cy="268.4" r="0.65" fill="#444" opacity="0.64"/><circle cx="289.1" cy="282.4" r="0.71" fill="#444" opacity="0.82"/><circle cx="402.3" cy="174.0" r="0.59" fill="#444" opacity="0.69"/><circle cx="400.6" cy="213.1" r="0.84" fill="#444" opacity="0.31"/><circle cx="179.4" cy="163.8" r="0.80" fill="#444" opacity="0.88"/><circle cx="378.9" cy="227.0" r="0.86" fill="#444" opacity="0.80"/><circle cx="372.6" cy="223.7" r="0.45" fill="#444" opacity="0.39"/><circle cx="188.9" cy="309.6" r="0.81" fill="#444" opacity="0.72"/><circle cx="391.3" cy="249.0" r="0.40" fill="#444" opacity="0.38"/><circle cx="220.5" cy="285.2" r="0.55" fill="#444" opacity="0.38"/><circle cx="223.0" cy="246.4" r="0.78" fill="#444" opacity="0.36"/><circle cx="172" cy="134" r="26.5" fill="#2b2b2b"/><circle cx="172" cy="134" r="12.0" fill="#262626" stroke="#bdbdbd" stroke-width="1.40"/><circle cx="172" cy="134.5" r="7.0" fill="#2a2a2a" stroke="#707070" stroke-width="1.20"/><circle cx="172" cy="134.8" r="4.8" fill="#333"/><circle cx="281" cy="106" r="26.5" fill="#2b2b2b"/><circle cx="281" cy="106" r="12.0" fill="#262626" stroke="#bdbdbd" stroke-width="1.40"/><circle cx="281" cy="106.5" r="7.0" fill="#2a2a2a" stroke="#707070" stroke-width="1.20"/><circle cx="281" cy="106.8" r="4.8" fill="#333"/><circle cx="219" cy="198" r="26.5" fill="#2b2b2b"/><circle cx="219" cy="198" r="12.0" fill="#262626" stroke="#bdbdbd" stroke-width="1.40"/><circle cx="219" cy="198.5" r="7.0" fill="#2a2a2a" stroke="#707070" stroke-width="1.20"/><circle cx="219" cy="198.8" r="4.8" fill="#333"/><circle cx="303" cy="190" r="26.5" fill="#2b2b2b"/><circle cx="303" cy="190" r="12.0" fill="#262626" stroke="#bdbdbd" stroke-width="1.40"/><circle cx="303" cy="190.5" r="7.0" fill="#2a2a2a" stroke="#707070" stroke-width="1.20"/><circle cx="303" cy="190.8" r="4.8" fill="#333"/><circle cx="376" cy="183" r="26.5" fill="#2b2b2b"/><circle cx="376" cy="183" r="12.0" fill="#262626" stroke="#bdbdbd" stroke-width="1.40"/><circle cx="376" cy="183.5" r="7.0" fill="#2a2a2a" stroke="#707070" stroke-width="1.20"/><circle cx="376" cy="183.8" r="4.8" fill="#333"/><circle cx="211" cy="290" r="26.5" fill="#2b2b2b"/><circle cx="211" cy="290" r="12.0" fill="#262626" stroke="#bdbdbd" stroke-width="1.40"/><circle cx="211" cy="290.5" r="7.0" fill="#2a2a2a" stroke="#707070" stroke-width="1.20"/><circle cx="211" cy="290.8" r="4.8" fill="#333"/><circle cx="240" cy="335" r="26.5" fill="#2b2b2b"/><circle cx="240" cy="335" r="12.0" fill="#262626" stroke="#bdbdbd" stroke-width="1.40"/><circle cx="240" cy="335.5" r="7.0" fill="#2a2a2a" stroke="#707070" stroke-width="1.20"/><circle cx="240" cy="335.8" r="4.8" fill="#333"/><rect x="35" y="14" width="1.5" height="84" fill="#333"/><rect x="35" y="98" width="3" height="302" fill="#111"/><rect x="153" y="4" width="273" height="3" fill="#000"/><rect x="153" y="4" width="29" height="4.5" fill="#000"/><rect x="424" y="4" width="1.5" height="175" fill="#333"/><rect x="424" y="179" width="2.5" height="221" fill="#111"/><rect x="35" y="398" width="391" height="2" fill="#222"/><rect x="105.5" y="86.5" width="12" height="12" fill="none" stroke="#6fd06f" stroke-width="1"/><path transform="translate(117,97)" d="M0.5 0.5v11l2.6-2.4 2 4.2 1.8-.8-2-4.1h3.6z" fill="#fff" stroke="#333" stroke-width="0.9"/></svg>

  <!-- canvas scrollbar -->
  <div class="a" style="left:620px;top:82px;width:13px;height:421px;background:#f0f0f0"></div>
  <div class="a" style="left:620px;top:83px;width:12px;height:12px;background:#f4f4f4;border-right:1px solid #666;border-bottom:1px solid #666"><svg class="a" style="left:3px;top:4px" width="6" height="4"><path d="M0 4L3 0l3 4z" fill="#111"/></svg></div>
  <div class="a" style="left:620px;top:95px;width:12px;height:12px;background:#ececec;border-right:1px solid #666;border-bottom:1px solid #666"></div>
  <div class="a" style="left:620px;top:474px;width:12px;height:12px;background:#f4f4f4;border-right:1px solid #666;border-bottom:1px solid #666;border-left:1px solid #fff"><svg class="a" style="left:3px;top:4px" width="6" height="4"><path d="M0 0h6L3 4z" fill="#111"/></svg></div>
  <div class="a" style="left:608px;top:486px;width:12px;height:13px;background:#f4f4f4;border-right:1px solid #666;border-bottom:1px solid #666"><svg class="a" style="left:4px;top:3px" width="4" height="6"><path d="M0 0l4 3-4 3z" fill="#111"/></svg></div>
  <!-- tabs row abs y 590-603 -->
  <div class="a" style="left:160px;top:486px;width:448px;height:13px;background:#f0f0f0"></div>
  <div class="a" style="left:162px;top:487px;width:9px;height:11px;border-right:1px solid #999"><svg class="a" style="left:2px;top:3px" width="4" height="6"><path d="M4 0L0 3l4 3z" fill="#999"/></svg></div>
  <div class="a" style="left:171px;top:487px;width:9px;height:11px;border-right:1px solid #999"><svg class="a" style="left:3px;top:3px" width="4" height="6"><path d="M0 0l4 3-4 3z" fill="#999"/></svg></div>
  <svg class="a" style="left:183px;top:486px" width="136" height="14" viewBox="0 0 136 14"><path d="M1 0.5h62l3 6.5-3 6.5H6z" fill="#fff" stroke="#333"/><path d="M66 7l3 6.5h55l4-13.5" fill="none" stroke="#333"/></svg>
  <div class="a" style="left:320px;top:487px;width:11px;height:11px;border-left:1px solid #444;border-right:1px solid #999"><svg class="a" style="left:3px;top:3px" width="4" height="6"><path d="M4 0L0 3l4 3z" fill="#111"/></svg></div>
  <div class="a" style="left:331px;top:487px;width:14px;height:11px;border-right:1px solid #999;border-bottom:1px solid #999"></div>

  <!-- right panel abs x 633-1000 -->
  <div class="a" style="left:637px;top:87px;width:349px;height:4px;border-top:1px solid #b4b4b4;border-bottom:1px solid #b4b4b4"></div>
  <svg class="a" style="left:989px;top:86px" width="7" height="7" viewBox="0 0 7 7"><path d="M1 1l5 5M6 1L1 6" stroke="#111" stroke-width="1.6"/></svg>
  <div class="a" style="left:641px;top:94px;width:356px;height:248px;background:#000"></div>
  <svg class="a" style="left:641px;top:94px" width="356" height="248" viewBox="0 0 356 248"><defs><filter id="bl3" x="-60%" y="-60%" width="220%" height="220%"><feGaussianBlur stdDeviation="6"/></filter></defs><rect x="56" y="3" width="244" height="245" fill="#fff"/><ellipse cx="185" cy="82" rx="13" ry="26" transform="rotate(-35 185 82)" fill="#4a4a4a" opacity="0.42" filter="url(#bl3)"/><ellipse cx="248" cy="83" rx="17" ry="22" transform="rotate(25 248 83)" fill="#4a4a4a" opacity="0.3" filter="url(#bl3)"/><ellipse cx="199" cy="157" rx="15" ry="19" transform="rotate(10 199 157)" fill="#4a4a4a" opacity="0.36" filter="url(#bl3)"/><ellipse cx="259" cy="146" rx="15" ry="8" transform="rotate(10 259 146)" fill="#4a4a4a" opacity="0.14" filter="url(#bl3)"/><circle cx="191.8" cy="185.2" r="0.53" fill="#444" opacity="0.53"/><circle cx="257.6" cy="105.0" r="0.49" fill="#444" opacity="0.70"/><circle cx="175.5" cy="88.0" r="0.46" fill="#444" opacity="0.75"/><circle cx="168.8" cy="71.5" r="0.44" fill="#444" opacity="0.67"/><circle cx="221.0" cy="56.6" r="0.32" fill="#444" opacity="0.32"/><circle cx="219.9" cy="62.7" r="0.40" fill="#444" opacity="0.60"/><circle cx="219.6" cy="79.6" r="0.45" fill="#444" opacity="0.63"/><circle cx="144.6" cy="200.9" r="0.47" fill="#444" opacity="0.77"/><circle cx="182.0" cy="65.5" r="0.37" fill="#444" opacity="0.44"/><circle cx="177.3" cy="79.9" r="0.33" fill="#444" opacity="0.45"/><circle cx="228.2" cy="72.9" r="0.30" fill="#444" opacity="0.40"/><circle cx="126.4" cy="95.6" r="0.42" fill="#444" opacity="0.34"/><circle cx="250.8" cy="67.4" r="0.33" fill="#444" opacity="0.47"/><circle cx="159.6" cy="209.5" r="0.37" fill="#444" opacity="0.35"/><circle cx="162.2" cy="89.6" r="0.50" fill="#444" opacity="0.39"/><circle cx="282.1" cy="79.8" r="0.43" fill="#444" opacity="0.49"/><circle cx="143.8" cy="230.3" r="0.38" fill="#444" opacity="0.79"/><circle cx="203.0" cy="156.9" r="0.36" fill="#444" opacity="0.80"/><circle cx="198.9" cy="87.2" r="0.43" fill="#444" opacity="0.30"/><circle cx="208.6" cy="139.7" r="0.32" fill="#444" opacity="0.40"/><circle cx="267.1" cy="84.9" r="0.49" fill="#444" opacity="0.36"/><circle cx="165.7" cy="210.3" r="0.42" fill="#444" opacity="0.61"/><circle cx="230.0" cy="136.9" r="0.37" fill="#444" opacity="0.39"/><circle cx="240.4" cy="64.7" r="0.44" fill="#444" opacity="0.34"/><circle cx="191.9" cy="87.8" r="0.59" fill="#444" opacity="0.42"/><circle cx="154.8" cy="237.0" r="0.52" fill="#444" opacity="0.33"/><circle cx="219.1" cy="86.8" r="0.48" fill="#444" opacity="0.34"/><circle cx="259.7" cy="76.3" r="0.30" fill="#444" opacity="0.43"/><circle cx="159.0" cy="229.7" r="0.38" fill="#444" opacity="0.57"/><circle cx="257.1" cy="89.0" r="0.44" fill="#444" opacity="0.47"/><circle cx="209.7" cy="58.7" r="0.44" fill="#444" opacity="0.48"/><circle cx="203.0" cy="156.0" r="0.49" fill="#444" opacity="0.54"/><circle cx="166.8" cy="226.6" r="0.32" fill="#444" opacity="0.57"/><circle cx="216.1" cy="62.9" r="0.51" fill="#444" opacity="0.70"/><circle cx="180.8" cy="181.4" r="0.57" fill="#444" opacity="0.74"/><circle cx="164.8" cy="219.9" r="0.45" fill="#444" opacity="0.31"/><circle cx="156.1" cy="224.7" r="0.32" fill="#444" opacity="0.35"/><circle cx="232.2" cy="82.1" r="0.52" fill="#444" opacity="0.49"/><circle cx="114.6" cy="239.4" r="0.33" fill="#444" opacity="0.68"/><circle cx="183.5" cy="92.8" r="0.31" fill="#444" opacity="0.78"/><circle cx="156.6" cy="84.5" r="0.58" fill="#444" opacity="0.43"/><circle cx="178.7" cy="93.0" r="0.48" fill="#444" opacity="0.56"/><circle cx="187.4" cy="138.8" r="0.57" fill="#444" opacity="0.46"/><circle cx="205.8" cy="177.1" r="0.54" fill="#444" opacity="0.76"/><circle cx="228.2" cy="100.6" r="0.39" fill="#444" opacity="0.37"/><circle cx="174.0" cy="31.7" r="0.38" fill="#444" opacity="0.38"/><circle cx="102.9" cy="232.2" r="0.55" fill="#444" opacity="0.49"/><circle cx="140.4" cy="187.0" r="0.55" fill="#444" opacity="0.61"/><circle cx="203.5" cy="159.3" r="0.56" fill="#444" opacity="0.32"/><circle cx="183.5" cy="149.6" r="0.54" fill="#444" opacity="0.31"/><circle cx="237.3" cy="90.3" r="0.53" fill="#444" opacity="0.43"/><circle cx="264.7" cy="28.0" r="0.33" fill="#444" opacity="0.35"/><circle cx="228.3" cy="149.2" r="0.36" fill="#444" opacity="0.54"/><circle cx="240.5" cy="50.3" r="0.46" fill="#444" opacity="0.32"/><circle cx="245.4" cy="101.2" r="0.51" fill="#444" opacity="0.56"/><circle cx="220.2" cy="105.0" r="0.57" fill="#444" opacity="0.34"/><circle cx="166.6" cy="103.9" r="0.56" fill="#444" opacity="0.70"/><circle cx="170.7" cy="163.6" r="0.36" fill="#444" opacity="0.66"/><circle cx="197.8" cy="130.0" r="0.59" fill="#444" opacity="0.79"/><circle cx="196.6" cy="188.7" r="0.30" fill="#444" opacity="0.55"/><circle cx="161.1" cy="94.1" r="0.53" fill="#444" opacity="0.54"/><circle cx="195.8" cy="127.4" r="0.43" fill="#444" opacity="0.32"/><circle cx="181.7" cy="116.0" r="0.44" fill="#444" opacity="0.80"/><circle cx="186.4" cy="212.3" r="0.58" fill="#444" opacity="0.34"/><circle cx="224.2" cy="92.5" r="0.55" fill="#444" opacity="0.58"/><circle cx="209.9" cy="77.5" r="0.47" fill="#444" opacity="0.46"/><circle cx="207.5" cy="207.8" r="0.48" fill="#444" opacity="0.45"/><circle cx="271.9" cy="78.2" r="0.47" fill="#444" opacity="0.40"/><circle cx="157.0" cy="83.4" r="0.31" fill="#444" opacity="0.78"/><circle cx="86.5" cy="201.4" r="0.34" fill="#444" opacity="0.35"/><circle cx="270.8" cy="93.0" r="0.42" fill="#444" opacity="0.78"/><circle cx="225.0" cy="119.4" r="0.58" fill="#444" opacity="0.76"/><circle cx="215.2" cy="170.2" r="0.31" fill="#444" opacity="0.43"/><circle cx="199.5" cy="86.8" r="0.30" fill="#444" opacity="0.44"/><circle cx="199.8" cy="180.5" r="0.45" fill="#444" opacity="0.59"/><circle cx="192.7" cy="126.5" r="0.56" fill="#444" opacity="0.31"/><circle cx="142" cy="82" r="16.6" fill="#2b2b2b"/><circle cx="142" cy="82" r="7.4" fill="#262626" stroke="#bdbdbd" stroke-width="0.87"/><circle cx="142" cy="82.3" r="4.3" fill="#2a2a2a" stroke="#707070" stroke-width="0.74"/><circle cx="142" cy="82.5" r="3.0" fill="#333"/><circle cx="210" cy="64" r="16.6" fill="#2b2b2b"/><circle cx="210" cy="64" r="7.4" fill="#262626" stroke="#bdbdbd" stroke-width="0.87"/><circle cx="210" cy="64.3" r="4.3" fill="#2a2a2a" stroke="#707070" stroke-width="0.74"/><circle cx="210" cy="64.5" r="3.0" fill="#333"/><circle cx="171" cy="122" r="16.6" fill="#2b2b2b"/><circle cx="171" cy="122" r="7.4" fill="#262626" stroke="#bdbdbd" stroke-width="0.87"/><circle cx="171" cy="122.3" r="4.3" fill="#2a2a2a" stroke="#707070" stroke-width="0.74"/><circle cx="171" cy="122.5" r="3.0" fill="#333"/><circle cx="224" cy="117" r="16.6" fill="#2b2b2b"/><circle cx="224" cy="117" r="7.4" fill="#262626" stroke="#bdbdbd" stroke-width="0.87"/><circle cx="224" cy="117.3" r="4.3" fill="#2a2a2a" stroke="#707070" stroke-width="0.74"/><circle cx="224" cy="117.5" r="3.0" fill="#333"/><circle cx="270" cy="112" r="16.6" fill="#2b2b2b"/><circle cx="270" cy="112" r="7.4" fill="#262626" stroke="#bdbdbd" stroke-width="0.87"/><circle cx="270" cy="112.3" r="4.3" fill="#2a2a2a" stroke="#707070" stroke-width="0.74"/><circle cx="270" cy="112.5" r="3.0" fill="#333"/><circle cx="166" cy="180" r="16.6" fill="#2b2b2b"/><circle cx="166" cy="180" r="7.4" fill="#262626" stroke="#bdbdbd" stroke-width="0.87"/><circle cx="166" cy="180.3" r="4.3" fill="#2a2a2a" stroke="#707070" stroke-width="0.74"/><circle cx="166" cy="180.5" r="3.0" fill="#333"/><circle cx="184" cy="208" r="16.6" fill="#2b2b2b"/><circle cx="184" cy="208" r="7.4" fill="#262626" stroke="#bdbdbd" stroke-width="0.87"/><circle cx="184" cy="208.3" r="4.3" fill="#2a2a2a" stroke="#707070" stroke-width="0.74"/><circle cx="184" cy="208.5" r="3.0" fill="#333"/><rect x="177" y="3" width="1" height="245" fill="#c83a3a"/><rect x="56" y="124" width="244" height="1" fill="#c83a3a"/><rect x="76" y="247" width="223" height="1" fill="#9a9a9a"/></svg>

  <div class="btn" style="left:650px;top:347px;width:55px;height:17px;line-height:14px"></div>
  <div class="btn" style="left:724px;top:347px;width:55px;height:17px;line-height:14px"></div>
  <div class="a" style="left:800px;top:350px;width:8px;height:8px;border:1px solid #555;border-right-color:#ddd;border-bottom-color:#ddd;background:#fff"></div>
  <div class="a" style="left:866px;top:350px;width:8px;height:8px;border:1px solid #555;border-right-color:#ddd;border-bottom-color:#ddd;background:#fff"><svg class="a" style="left:0;top:0" width="7" height="7"><path d="M1 3l2 3 4-6" stroke="#111" stroke-width="1.3" fill="none"/></svg></div>
  <div class="a" style="left:940px;top:350px;width:8px;height:8px;border:1px solid #555;border-right-color:#ddd;border-bottom-color:#ddd;background:#fff"></div>
  <!-- vision template group abs y 476-576 -->
  <div class="a" style="left:637px;top:372px;width:360px;height:100px;border:1px solid #c4c4c4;box-shadow:inset 1px 1px 0 #fff"></div>
  <div class="a" style="left:640px;top:380px;width:135px;height:89px;background:#fff;border-top:1px solid #888;border-left:2px solid #777"></div>
  <div class="a" style="left:642px;top:381px;width:133px;height:12px;background:#f2f2f2;border-bottom:1px solid #808080"></div>
  <div class="a" style="left:681px;top:381px;width:1px;height:11px;background:#777"></div>
  <div class="a" style="left:642px;top:380px;width:133px;height:1px;background:#777"></div>
  <div class="a" style="left:644px;top:396px;width:10px;height:10px;border:1px solid #666;background:#fff"><svg class="a" style="left:0;top:0" width="8" height="8"><path d="M1 3.5l2.2 3L7 .5" stroke="#111" stroke-width="1.6" fill="none"/></svg></div>
  <div class="a" style="left:642px;top:456px;width:133px;height:12px;background:#f0f0f0"></div>
  <svg class="a" style="left:644px;top:459px" width="4" height="6"><path d="M4 0L0 3 4 6z" fill="#444"/></svg>
  <div class="a" style="left:655px;top:456px;width:106px;height:11px;background:linear-gradient(#f6f6f6,#dcdcdc);border:1px solid #999;border-radius:2px"></div>
  <svg class="a" style="left:767px;top:459px" width="4" height="6"><path d="M0 0l4 3-4 3z" fill="#444"/></svg>
  <div class="btn" style="left:784px;top:378px;width:55px;height:15px;line-height:12px"></div>
  <div class="btn" style="left:784px;top:397px;width:55px;height:15px;line-height:12px"></div>
  <div class="btn" style="left:784px;top:416px;width:55px;height:15px;line-height:12px;border:1px solid #222;box-shadow:inset 1px 1px 0 #fff,inset -2px -2px 0 #777"></div>
  <div class="btn" style="left:784px;top:436px;width:55px;height:15px;line-height:12px"></div>
  <div class="btn" style="left:784px;top:455px;width:55px;height:15px;line-height:12px"></div>
  <div class="inp" style="left:930px;top:378px;width:51px;height:14px;line-height:12px"></div>
  <div class="inp" style="left:930px;top:397px;width:51px;height:14px;line-height:12px"></div>
  <div class="inp" style="left:930px;top:415px;width:51px;height:14px;line-height:12px;background:#f0f0f0;color:#999;border-color:#bbb"></div>
  <div class="inp" style="left:930px;top:433px;width:51px;height:14px;line-height:12px"></div>
  <div class="a" style="left:985px;top:416px;width:8px;height:9px;border-top:1px solid #555;border-left:1px solid #555;background:#fff"></div>
  <div class="btn" style="left:882px;top:453px;width:102px;height:15px;line-height:12px"></div>
  <!-- bottom buttons abs y 582-599 -->
  <div class="btn" style="left:640px;top:478px;width:55px;height:17px;line-height:14px"></div>
  <div class="btn" style="left:699px;top:478px;width:55px;height:17px;line-height:14px"></div>
  <div class="btn" style="left:758px;top:478px;width:55px;height:17px;line-height:14px"></div>
  <div class="btn" style="left:816px;top:478px;width:55px;height:17px;line-height:14px"></div>
  <div class="btn" style="left:874px;top:478px;width:55px;height:17px;line-height:14px;color:#aaa"></div>
  <div class="btn" style="left:932px;top:478px;width:55px;height:17px;line-height:14px"></div>

  <!-- bottom toolbar abs y 603-628 -->
  <div class="a" style="left:2px;top:499px;width:998px;height:25px;background:#f0f0f0;border-top:1px solid #c0c0c0;border-bottom:1px solid #a0a0a0"></div>
  <div class="a" style="left:3px;top:503px;width:1px;height:18px;background:repeating-linear-gradient(#999 0 1px,transparent 1px 3px)"></div>
<svg class="a" style="left:13px;top:506px" width="11" height="12" viewBox="0 0 11 12"><path d="M1 0v12M1 1.5h5v4H1M1.5 6.5L10 9l-4.5 2.5L1.5 9z" fill="none" stroke="#111" stroke-width="1.3"/></svg>
<svg class="a" style="left:36px;top:506px" width="11" height="12" viewBox="0 0 11 12"><path d="M10 0v12M10 1.5H5v4h5M9.5 6.5L1 9l4.5 2.5L9.5 9z" fill="none" stroke="#111" stroke-width="1.3"/></svg>
<svg class="a" style="left:58px;top:506px" width="11" height="12" viewBox="0 0 11 12"><path d="M0 1h11M1 1v5h4V1M5.5 1L8 5.5 5.5 10 3 5.5" fill="none" stroke="#111" stroke-width="1.3"/><path d="M5 1l5 4.5-5 4.5" fill="none" stroke="#111" stroke-width="1.3"/></svg>
<svg class="a" style="left:81px;top:506px" width="12" height="12" viewBox="0 0 12 12"><path d="M0 11h12M1 11V6h5v5M8.5 2l3 4.5-3 4.5-3-4.5z" fill="none" stroke="#111" stroke-width="1.3"/></svg>
<svg class="a" style="left:104px;top:506px" width="11" height="12" viewBox="0 0 11 12"><path d="M5.5 0v12M2 1.5h7v4H2M5.5 6.5L10 9l-4.5 2.5L1 9z" fill="none" stroke="#111" stroke-width="1.3"/></svg>
<svg class="a" style="left:126px;top:506px" width="12" height="12" viewBox="0 0 12 12"><path d="M0 6h12M1.5 2.5v7h4v-7M8.5 1.5L11.5 6 8.5 10.5 5.5 6z" fill="none" stroke="#111" stroke-width="1.3"/></svg>
<svg class="a" style="left:149px;top:506px" width="12" height="12" viewBox="0 0 12 12"><rect x="0.7" y="0.7" width="10.6" height="10.6" fill="none" stroke="#111" stroke-width="1.4"/><path d="M4.3 .7v10.6M7.7 .7v10.6M.7 4.3h10.6M.7 7.7h10.6" stroke="#111" stroke-width="1"/></svg>
<div class="sep" style="left:168px;top:503px;height:20px"></div>
<svg class="a" style="left:175px;top:507px" width="13" height="10" viewBox="0 0 13 10"><path d="M1 1q3 4 0 8M12 1q-3 4 0 8M3 5h7" fill="none" stroke="#111" stroke-width="1.6"/></svg>
<svg class="a" style="left:199px;top:506px" width="11" height="12" viewBox="0 0 11 12"><path d="M1 1q4.5 3 9 0M1 11q4.5-3 9 0M5.5 3v6" fill="none" stroke="#111" stroke-width="1.6"/></svg>
<svg class="a" style="left:221px;top:508px" width="13" height="9" viewBox="0 0 13 9"><rect x="0.8" y="0.8" width="11.4" height="7.4" rx="1.5" fill="none" stroke="#111" stroke-width="1.5"/><path d="M1 4.5h11" stroke="#111" stroke-width="1.2"/></svg>
<svg class="a" style="left:245px;top:506px" width="9" height="13" viewBox="0 0 9 13"><rect x="0.8" y="0.8" width="7.4" height="11.4" rx="1.5" fill="none" stroke="#111" stroke-width="1.5"/><path d="M4.5 1v11" stroke="#111" stroke-width="1.2"/></svg>
<svg class="a" style="left:267px;top:506px" width="13" height="13" viewBox="0 0 13 13"><rect x="0.8" y="0.8" width="11.4" height="11.4" rx="1.5" fill="none" stroke="#111" stroke-width="1.5"/><path d="M6.5 1v11M1 6.5h11" stroke="#111" stroke-width="1.5"/></svg>
<div class="sep" style="left:286px;top:503px;height:20px"></div>
<svg class="a" style="left:295px;top:507px" width="13" height="13" viewBox="0 0 13 13"><path d="M1 1l11 11" stroke="#c83c3c" stroke-width="1.3" fill="none"/><path d="M1 7V1h6" stroke="#b03a3a" stroke-width="1.4" fill="none"/></svg>
<svg class="a" style="left:318px;top:507px" width="13" height="13" viewBox="0 0 13 13"><path d="M12 1L1 12" stroke="#c83c3c" stroke-width="1.3" fill="none"/><path d="M6 1h6" stroke="#c83c3c" stroke-width="1.3" fill="none"/><path d="M12 1v11" stroke="#222" stroke-width="1.4"/></svg>
<svg class="a" style="left:340px;top:507px" width="13" height="13" viewBox="0 0 13 13"><path d="M1 12L12 1" stroke="#c83c3c" stroke-width="1.3" fill="none"/><path d="M1 6v6" stroke="#c83c3c" stroke-width="1.3" fill="none"/><path d="M1 12h11" stroke="#222" stroke-width="1.4"/></svg>
<svg class="a" style="left:363px;top:507px" width="13" height="13" viewBox="0 0 13 13"><path d="M1 1l11 11M12 6v6H6" stroke="#c83c3c" stroke-width="1.3" fill="none"/><path d="M12 12H2" stroke="#777" stroke-width="1.2"/></svg>
<div class="a" style="left:382.8px;top:502px;width:22.6px;height:21.5px;background:#000000;box-shadow:0 0 0 .5px #bbb"></div>
<div class="a" style="left:408.3px;top:502px;width:22.6px;height:21.5px;background:#ff1a0a;box-shadow:0 0 0 .5px #bbb"></div>
<div class="a" style="left:433.8px;top:502px;width:22.6px;height:21.5px;background:#fff000;box-shadow:0 0 0 .5px #bbb"></div>
<div class="a" style="left:459.2px;top:502px;width:22.6px;height:21.5px;background:#00c81e;box-shadow:0 0 0 .5px #bbb"></div>
<div class="a" style="left:484.7px;top:502px;width:22.6px;height:21.5px;background:#00e6ff;box-shadow:0 0 0 .5px #bbb"></div>
<div class="a" style="left:510.2px;top:502px;width:22.6px;height:21.5px;background:#0014f0;box-shadow:0 0 0 .5px #bbb"></div>
<div class="a" style="left:535.7px;top:502px;width:22.6px;height:21.5px;background:#ff28ff;box-shadow:0 0 0 .5px #bbb"></div>
<div class="a" style="left:561.2px;top:502px;width:22.6px;height:21.5px;background:#78dc0a;box-shadow:0 0 0 .5px #bbb"></div>
<div class="a" style="left:586.6px;top:502px;width:22.6px;height:21.5px;background:#857800;box-shadow:0 0 0 .5px #bbb"></div>
<div class="a" style="left:612.1px;top:502px;width:22.6px;height:21.5px;background:#007864;box-shadow:0 0 0 .5px #bbb"></div>
<div class="a" style="left:637.6px;top:502px;width:22.6px;height:21.5px;background:#00dc46;box-shadow:0 0 0 .5px #bbb"></div>
<div class="a" style="left:663.1px;top:502px;width:22.6px;height:21.5px;background:#460a96;box-shadow:0 0 0 .5px #bbb"></div>
<div class="a" style="left:688.6px;top:502px;width:22.6px;height:21.5px;background:#ffd2dc;box-shadow:0 0 0 .5px #bbb"></div>
<div class="a" style="left:714.0px;top:502px;width:22.6px;height:21.5px;background:#aaaaff;box-shadow:0 0 0 .5px #bbb"></div>
<div class="a" style="left:739.5px;top:502px;width:22.6px;height:21.5px;background:#d2f090;box-shadow:0 0 0 .5px #bbb"></div>
<div class="a" style="left:765.0px;top:502px;width:22.6px;height:21.5px;background:#ff9650;box-shadow:0 0 0 .5px #bbb"></div>
<div class="a" style="left:790.5px;top:502px;width:22.6px;height:21.5px;background:#e6788c;box-shadow:0 0 0 .5px #bbb"></div>
<div class="a" style="left:816.0px;top:502px;width:22.6px;height:21.5px;background:#8c78e6;box-shadow:0 0 0 .5px #bbb"></div>
<div class="a" style="left:841.4px;top:502px;width:22.6px;height:21.5px;background:#64c878;box-shadow:0 0 0 .5px #bbb"></div>
<div class="a" style="left:866.9px;top:502px;width:22.6px;height:21.5px;background:#aa9a6e;box-shadow:0 0 0 .5px #bbb"></div>
<div class="a" style="left:892.4px;top:502px;width:22.6px;height:21.5px;background:#000000;box-shadow:0 0 0 .5px #bbb"></div>
<div class="a" style="left:937px;top:500px;width:1px;height:24px;background:#c8c8c8;border-right:1px solid #fff"></div>
  <!-- status bar abs y 629-645 -->
  <div class="a" style="left:0;top:525px;width:1000px;height:16px;background:#f0f0f0"></div>
  <div class="a" style="left:600px;top:527px;width:77px;height:12px;border-top:1px solid #999;border-left:1px solid #999"></div>
  <div class="a" style="left:679px;top:527px;width:72px;height:12px;border-top:1px solid #999;border-left:1px solid #999"></div>
  <div class="a" style="left:753px;top:527px;width:72px;height:12px;border-top:1px solid #999;border-left:1px solid #999"></div>
  <div class="a" style="left:827px;top:527px;width:116px;height:12px;border-top:1px solid #999;border-left:1px solid #999"></div>
  <div class="a" style="left:945px;top:527px;width:53px;height:12px;border-top:1px solid #999;border-left:1px solid #999"></div>
</div>
<div class="t" style="left:5.6px;top:121.2px;font:9.5px 'Liberation Sans',sans-serif;color:#1a1a1a;transform:scaleX(0.873);">File(F)</div>
<div class="t" style="left:40.0px;top:121.2px;font:9.5px 'Liberation Sans',sans-serif;color:#1a1a1a;transform:scaleX(0.925);">Edit(E)</div>
<div class="t" style="left:77.6px;top:121.2px;font:9.5px 'Liberation Sans',sans-serif;color:#1a1a1a;transform:scaleX(0.977);">Draw(D)</div>
<div class="t" style="left:122.4px;top:121.2px;font:9.5px 'Liberation Sans',sans-serif;color:#1a1a1a;transform:scaleX(1.008);">Align</div>
<div class="t" style="left:154.0px;top:121.2px;font:9.5px 'Liberation Sans',sans-serif;color:#1a1a1a;transform:scaleX(0.954);">View(V)</div>
<div class="t" style="left:196.0px;top:121.2px;font:9.5px 'Liberation Sans',sans-serif;color:#1a1a1a;transform:scaleX(0.992);">Help(H)</div>
<div class="t" style="left:238.6px;top:121.2px;font:9.5px 'Liberation Sans',sans-serif;color:#1a1a1a;transform:scaleX(0.979);">Function</div>
<div class="t" style="left:4.8px;top:163.8px;font:9px 'Liberation Sans',sans-serif;color:#262626;transform:scaleX(1.000);">X</div>
<div class="t" style="left:4.8px;top:175.8px;font:9px 'Liberation Sans',sans-serif;color:#262626;transform:scaleX(1.000);">Y</div>
<div class="t" style="left:19.2px;top:163.5px;font:8.6px 'Liberation Sans',sans-serif;color:#262626;transform:scaleX(1.270);">0.000</div>
<div class="t" style="left:19.2px;top:175.5px;font:8.6px 'Liberation Sans',sans-serif;color:#262626;transform:scaleX(1.270);">0.000</div>
<div class="t" style="left:62.0px;top:163.8px;font:9px 'Liberation Sans',sans-serif;color:#262626;transform:scaleX(0.759);">mm</div>
<div class="t" style="left:62.0px;top:176.0px;font:9px 'Liberation Sans',sans-serif;color:#262626;transform:scaleX(0.759);">mm</div>
<div class="t" style="left:102.7px;top:163.5px;font:8.6px 'Liberation Sans',sans-serif;color:#262626;transform:scaleX(1.270);">0.000</div>
<div class="t" style="left:102.7px;top:175.5px;font:8.6px 'Liberation Sans',sans-serif;color:#262626;transform:scaleX(1.270);">0.000</div>
<div class="t" style="left:147.6px;top:163.8px;font:9px 'Liberation Sans',sans-serif;color:#262626;transform:scaleX(0.779);">mm</div>
<div class="t" style="left:147.6px;top:176.0px;font:9px 'Liberation Sans',sans-serif;color:#262626;transform:scaleX(0.779);">mm</div>
<div class="t" style="left:172.0px;top:163.5px;font:8.6px 'Liberation Sans',sans-serif;color:#262626;transform:scaleX(0.967);">100.0</div>
<div class="t" style="left:172.0px;top:175.5px;font:8.6px 'Liberation Sans',sans-serif;color:#262626;transform:scaleX(0.967);">100.0</div>
<div class="t" style="left:212.4px;top:163.8px;font:9px 'Liberation Sans',sans-serif;color:#262626;transform:scaleX(1.000);">%</div>
<div class="t" style="left:212.4px;top:176.0px;font:9px 'Liberation Sans',sans-serif;color:#262626;transform:scaleX(1.000);">%</div>
<div class="t" style="left:305.2px;top:169.0px;font:9px 'Liberation Sans',sans-serif;color:#262626;transform:scaleX(0.879);">0.000</div>
<div class="t" style="left:343.6px;top:169.0px;font:9px 'Liberation Sans',sans-serif;color:#262626;transform:scaleX(0.926);">deg</div>
<div class="t" style="left:378.6px;top:170.3px;font:9px 'Liberation Sans',sans-serif;color:#262626;transform:scaleX(0.874);">Process No:</div>
<div class="t" style="left:428.7px;top:170.0px;font:9px 'Liberation Sans',sans-serif;color:#262626;transform:scaleX(1.000);">1</div>
<div class="t" style="left:11.9px;top:203.4px;font:9.5px 'Liberation Sans',sans-serif;color:#262626;transform:scaleX(0.758);">NO</div>
<div class="t" style="left:51.0px;top:203.4px;font:9.5px 'Liberation Sans',sans-serif;color:#262626;transform:scaleX(0.786);">Name</div>
<div class="t" style="left:98.7px;top:203.4px;font:9.5px 'Liberation Sans',sans-serif;color:#262626;transform:scaleX(0.862);">Type</div>
<div class="t" style="left:21.0px;top:216.3px;font:9.5px 'Liberation Sans',sans-serif;color:#262626;transform:scaleX(1.000);">1</div>
<div class="t" style="left:49.0px;top:216.3px;font:9.5px 'Liberation Sans',sans-serif;color:#262626;transform:scaleX(0.810);">Module</div>
<div class="t" style="left:103.0px;top:216.3px;font:9.5px 'Liberation Sans',sans-serif;color:#262626;transform:scaleX(0.766);">Dib</div>
<div class="t" style="left:15.0px;top:311.2px;font:9.5px 'Liberation Sans',sans-serif;color:#262626;transform:scaleX(0.865);background:#f0f0f0;">Feature property</div>
<div class="t" style="left:53.0px;top:334.1px;font:8.5px 'Liberation Sans',sans-serif;color:#262626;transform:scaleX(1.000);">0</div>
<div class="t" style="left:53.0px;top:352.8px;font:8.5px 'Liberation Sans',sans-serif;color:#262626;transform:scaleX(1.000);">0</div>
<div class="t" style="left:53.0px;top:370.3px;font:8.5px 'Liberation Sans',sans-serif;color:#262626;transform:scaleX(0.942);">0.021</div>
<div class="t" style="left:53.0px;top:386.1px;font:8.5px 'Liberation Sans',sans-serif;color:#262626;transform:scaleX(0.942);">0.021</div>
<div class="t" style="left:105.0px;top:334.1px;font:8.5px 'Liberation Sans',sans-serif;color:#262626;transform:scaleX(0.838);">mm</div>
<div class="t" style="left:105.0px;top:352.8px;font:8.5px 'Liberation Sans',sans-serif;color:#262626;transform:scaleX(0.838);">mm</div>
<div class="t" style="left:105.0px;top:370.3px;font:8.5px 'Liberation Sans',sans-serif;color:#262626;transform:scaleX(0.838);">mm</div>
<div class="t" style="left:105.0px;top:386.1px;font:8.5px 'Liberation Sans',sans-serif;color:#262626;transform:scaleX(0.838);">mm</div>
<div class="t" style="left:160.0px;top:187.6px;font:12px 'Liberation Mono',monospace;color:#cc4438;transform:scaleX(0.919);-webkit-text-stroke:0;">Edit&nbsp;&nbsp;Feature-Vision1-1</div>
<div class="t" style="left:193.0px;top:591.5px;font:10px 'Liberation Sans',sans-serif;color:#1e1e1e;transform:scaleX(0.951);">Work-Place</div>
<div class="t" style="left:257.0px;top:592.0px;font:9px 'Liberation Sans',sans-serif;color:#262626;transform:scaleX(0.841);">Module-Page</div>
<div class="t" style="left:657.6px;top:454.1px;font:9.5px 'Liberation Sans',sans-serif;color:#1e1e1e;transform:scaleX(0.810);">Full screen</div>
<div class="t" style="left:737.0px;top:454.1px;font:9.5px 'Liberation Sans',sans-serif;color:#1e1e1e;transform:scaleX(0.794);">Camera</div>
<div class="t" style="left:812.5px;top:453.1px;font:9.5px 'Liberation Sans',sans-serif;color:#262626;transform:scaleX(0.837);">Effect Area</div>
<div class="t" style="left:878.0px;top:453.1px;font:9.5px 'Liberation Sans',sans-serif;color:#262626;transform:scaleX(0.824);">Cross Center</div>
<div class="t" style="left:952.8px;top:453.1px;font:9.5px 'Liberation Sans',sans-serif;color:#262626;transform:scaleX(0.801);">Show Ruler</div>
<div class="t" style="left:643.0px;top:471.4px;font:9.5px 'Liberation Sans',sans-serif;color:#262626;transform:scaleX(0.796);background:#f0f0f0;">Vision Template</div>
<div class="t" style="left:645.2px;top:486.4px;font:9.5px 'Liberation Sans',sans-serif;color:#262626;transform:scaleX(0.862);">nInedx</div>
<div class="t" style="left:718.7px;top:486.4px;font:9.5px 'Liberation Sans',sans-serif;color:#262626;transform:scaleX(0.778);">Name</div>
<div class="t" style="left:656.0px;top:500.4px;font:9.5px 'Liberation Sans',sans-serif;color:#262626;transform:scaleX(1.000);">0</div>
<div class="t" style="left:728.5px;top:500.4px;font:9.5px 'Liberation Sans',sans-serif;color:#262626;transform:scaleX(1.000);">1</div>
<div class="t" style="left:800.0px;top:483.7px;font:9.5px 'Liberation Sans',sans-serif;color:#1e1e1e;transform:scaleX(0.846);">Delete</div>
<div class="t" style="left:801.0px;top:503.2px;font:9.5px 'Liberation Sans',sans-serif;color:#1e1e1e;transform:scaleX(0.869);">Copy</div>
<div class="t" style="left:804.0px;top:522.7px;font:9.5px 'Liberation Sans',sans-serif;color:#1e1e1e;transform:scaleX(0.903);">Add</div>
<div class="t" style="left:791.7px;top:541.7px;font:9.5px 'Liberation Sans',sans-serif;color:#1e1e1e;transform:scaleX(0.849);">Match Test</div>
<div class="t" style="left:790.0px;top:561.2px;font:9.5px 'Liberation Sans',sans-serif;color:#1e1e1e;transform:scaleX(0.833);">Clear Match</div>
<div class="t" style="left:855.7px;top:484.2px;font:9.5px 'Liberation Sans',sans-serif;color:#262626;transform:scaleX(0.850);">Feature Smooth(%)</div>
<div class="t" style="left:859.4px;top:502.7px;font:9.5px 'Liberation Sans',sans-serif;color:#262626;transform:scaleX(0.843);">Feature Similar(%)</div>
<div class="t" style="left:873.0px;top:519.7px;font:9.5px 'Liberation Sans',sans-serif;color:#444;transform:scaleX(0.844);">Match Angle(°)</div>
<div class="t" style="left:875.0px;top:538.7px;font:9.5px 'Liberation Sans',sans-serif;color:#262626;transform:scaleX(0.821);">Match Number</div>
<div class="t" style="left:932.6px;top:484.2px;font:9.5px 'Liberation Sans',sans-serif;color:#262626;transform:scaleX(0.865);">80.000</div>
<div class="t" style="left:932.6px;top:502.7px;font:9.5px 'Liberation Sans',sans-serif;color:#262626;transform:scaleX(0.865);">80.000</div>
<div class="t" style="left:933.4px;top:519.7px;font:9.5px 'Liberation Sans',sans-serif;color:#aaa;transform:scaleX(0.920);">0.000</div>
<div class="t" style="left:935.0px;top:538.7px;font:9.5px 'Liberation Sans',sans-serif;color:#262626;transform:scaleX(1.000);">1</div>
<div class="t" style="left:704.0px;top:561.6px;font:7px 'Liberation Sans',sans-serif;color:#555;transform:scaleX(1.019);">III</div>
<div class="t" style="left:892.0px;top:558.7px;font:9.5px 'Liberation Sans',sans-serif;color:#1e1e1e;transform:scaleX(0.812);">Advanced Mod-params</div>
<div class="t" style="left:647.4px;top:584.7px;font:9.5px 'Liberation Sans',sans-serif;color:#1e1e1e;transform:scaleX(0.807);">Layer Para</div>
<div class="t" style="left:707.0px;top:584.7px;font:9.5px 'Liberation Sans',sans-serif;color:#1e1e1e;transform:scaleX(0.837);">Transform</div>
<div class="t" style="left:776.0px;top:584.7px;font:9.5px 'Liberation Sans',sans-serif;color:#1e1e1e;transform:scaleX(0.883);">Test</div>
<div class="t" style="left:823.0px;top:584.7px;font:9.5px 'Liberation Sans',sans-serif;color:#1e1e1e;transform:scaleX(0.837);">Parameter</div>
<div class="t" style="left:884.6px;top:584.7px;font:9.5px 'Liberation Sans',sans-serif;color:#b0b0b0;transform:scaleX(0.829);">Red light</div>
<div class="t" style="left:950.0px;top:584.7px;font:9.5px 'Liberation Sans',sans-serif;color:#1e1e1e;transform:scaleX(0.815);">Mark</div>
<div class="t" style="left:3.6px;top:632.1px;font:10px 'Liberation Sans',sans-serif;color:#1e1e1e;transform:scaleX(0.971);">--- *Welcome to use the Laser system of marking,Propose the display area 1280*1024 or higher *---</div>
<div class="t" style="left:602.0px;top:632.5px;font:10px 'Liberation Sans',sans-serif;color:#1e1e1e;transform:scaleX(0.908);">Finish num:535</div>
<div class="t" style="left:681.6px;top:632.5px;font:10px 'Liberation Sans',sans-serif;color:#1e1e1e;transform:scaleX(0.885);">000:00:02.637</div>
<div class="t" style="left:755.0px;top:632.5px;font:10px 'Liberation Sans',sans-serif;color:#1e1e1e;transform:scaleX(0.885);">000:21:52.936</div>
<div class="t" style="left:828.4px;top:632.5px;font:10px 'Liberation Sans',sans-serif;color:#1e1e1e;transform:scaleX(0.931);">(64.732mm,-36.100mm)</div>
</body></html>
